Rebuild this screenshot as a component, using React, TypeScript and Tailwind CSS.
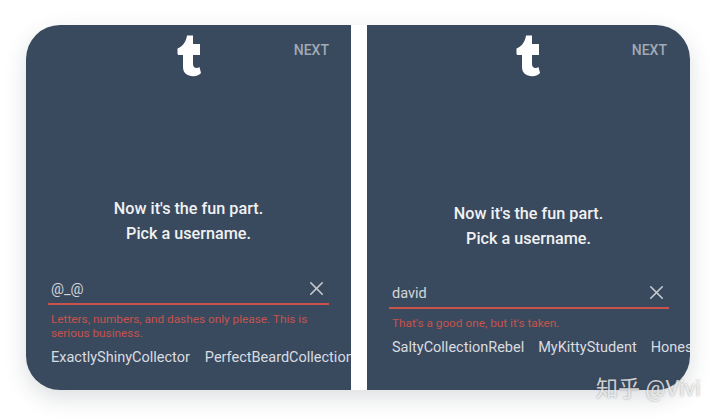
import React from 'react';
import { X } from 'lucide-react';

function TumblrLogo() {
  return (
    <svg width="24" height="42" viewBox="0 0 24 42" className="block">
      <path
        fill="#ffffff"
        d="M10 0.5H16V9H23V20H16V29C16 31.5 17.5 33 19.5 33C20.8 33 21.8 32.6 22.5 32L24 38C22.6 40 19.8 41.2 16.4 41.2C10 41.2 6 38 6 32V20H2C1 20 0.5 19.4 0.5 18.5V13.5C5 12 9 7.4 10 0.5Z"
      />
    </svg>
  );
}

interface SignupPanelProps {
  logoOffset: string;
  nextClass: string;
  titleClass: string;
  inputClass: string;
  value: string;
  errorClass: string;
  error: React.ReactNode;
  suggestions: string[];
  suggestionsClass: string;
  className: string;
}

function SignupPanel({
  logoOffset,
  nextClass,
  titleClass,
  inputClass,
  value,
  errorClass,
  error,
  suggestions,
  suggestionsClass,
  className
}: SignupPanelProps) {
  return (
    <div className={`flex flex-col h-full overflow-hidden bg-[#3a4a5e] ${className}`}>
      <div className="relative h-[52px] shrink-0">
        <div className={`absolute top-[10px] ${logoOffset}`}>
          <TumblrLogo />
        </div>
        <span className={`absolute top-[17px] text-[14px] leading-[16px] font-medium text-[#a2a9b3] ${nextClass}`}>
          NEXT
        </span>
      </div>
      <div className={`text-center text-[16.2px] leading-[25px] font-medium text-[#f0f1f3] ${titleClass}`}>
        <p>Now it's the fun part.</p>
        <p>Pick a username.</p>
      </div>
      <div className={`relative border-b-[2.5px] border-[#c9534b] h-[28px] ${inputClass}`}>
        <span className="absolute left-[3px] top-[3px] text-[14.5px] leading-[20px] text-[#d3d6da]">{value}</span>
        <X
          className="absolute right-[1px] top-0 text-[#c6cad0]"
          size={23}
          strokeWidth={1.7}
        />
      </div>
      <div className={`text-[11.8px] leading-[15px] text-[#c5534d] ${errorClass}`}>{error}</div>
      <div className={`flex whitespace-nowrap text-[14.5px] leading-[20px] text-[#d9dce0] ${suggestionsClass}`}>
        {suggestions.map((name) => (
          <span key={name}>{name}</span>
        ))}
      </div>
    </div>
  );
}

export default function App() {
  return (
    <div
      className="relative h-[419px] w-[720px] overflow-hidden bg-white"
      style={{ fontFamily: 'Roboto, "Noto Sans CJK SC", sans-serif' }}
    >
      <div className="ml-[26px] flex h-[390px] w-[664px] pt-[25px]">
        <div className="relative flex h-[365px] w-[664px] gap-[16px] rounded-[34px] bg-white shadow-[0_8px_22px_rgba(40,50,65,0.16)]">
          <div className="h-full w-[325px]">
            <SignupPanel
              className="rounded-l-[34px]"
              logoOffset="left-[151px]"
              nextClass="right-[22px]"
              titleClass="mt-[119px]"
              inputClass="mt-[31px] ml-[22px] w-[281px]"
              value="@_@"
              errorClass="mt-[7px] ml-[25px] mr-[30px]"
              error={
                <>
                  <p>Letters, numbers, and dashes only please. This is</p>
                  <p className="-mt-[1px]">serious business.</p>
                </>
              }
              suggestions={['ExactlyShinyCollector', 'PerfectBeardCollection']}
              suggestionsClass="mt-[7px] ml-[25px] gap-[15px]"
            />
          </div>
          <div className="h-full w-[323px]">
            <SignupPanel
              className="rounded-r-[34px]"
              logoOffset="left-[149px]"
              nextClass="right-[23px]"
              titleClass="mt-[124px]"
              inputClass="mt-[30px] ml-[22px] w-[280px]"
              value="david"
              errorClass="mt-[7px] ml-[25px]"
              error={<p>That's a good one, but it's taken.</p>}
              suggestions={['SaltyCollectionRebel', 'MyKittyStudent', 'HonestSmile']}
              suggestionsClass="mt-[7px] ml-[25px] gap-[14px]"
            />
          </div>
        </div>
      </div>
      <div className="absolute left-[596px] top-[375px] text-[22px] leading-[28px] text-white/75 [text-shadow:0_0_2px_rgba(60,60,60,0.5)]">
        知乎 @Vivi
      </div>
    </div>
  );
}
